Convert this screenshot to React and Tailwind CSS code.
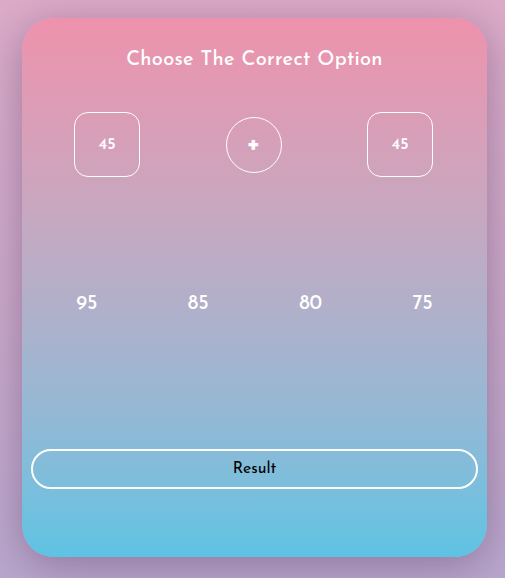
export default function App() {
  const font = { fontFamily: '"Josefin Sans", Lato, "Noto Sans", sans-serif' };
  return (
    <div
      className="w-[505px] h-[578px] bg-gradient-to-b from-[#dcabc8] to-[#b9a7cd] flex justify-center pt-[18px] pl-[4px] overflow-hidden"
      style={font}
    >
      <div className="w-[465px] h-[539px] rounded-[32px] bg-gradient-to-b from-[#ee92ac] to-[#5dc3e3] shadow-[0_8px_40px_rgba(60,30,70,0.35)] flex flex-col px-[9px]">
        <h1 className="text-white text-[20px] font-medium text-center mt-[30px] leading-[24px] tracking-[0.3px]">
          Choose The Correct Option
        </h1>
        <div className="flex justify-between items-center mt-[40px] pl-[43px] pr-[45px]">
          <div className="w-[66px] h-[65px] rounded-[14px] border border-white flex items-center justify-center text-white text-[16px] font-semibold leading-none pt-[1px]">
            45
          </div>
          <div className="w-[56px] h-[56px] rounded-full border border-white flex items-center justify-center text-white text-[26px] font-bold leading-none pt-[0px]">
            +
          </div>
          <div className="w-[66px] h-[65px] rounded-[14px] border border-white flex items-center justify-center text-white text-[16px] font-semibold leading-none pt-[1px]">
            45
          </div>
        </div>
        <div className="flex justify-around items-center mt-[115px] text-white text-[20px] font-medium leading-[24px]">
          <span>95</span>
          <span>85</span>
          <span>80</span>
          <span>75</span>
        </div>
        <button className="mt-[133px] h-[40px] w-full rounded-full border-2 border-white text-black text-[16px] font-normal flex items-center justify-center">
          Result
        </button>
      </div>
    </div>
  );
}
